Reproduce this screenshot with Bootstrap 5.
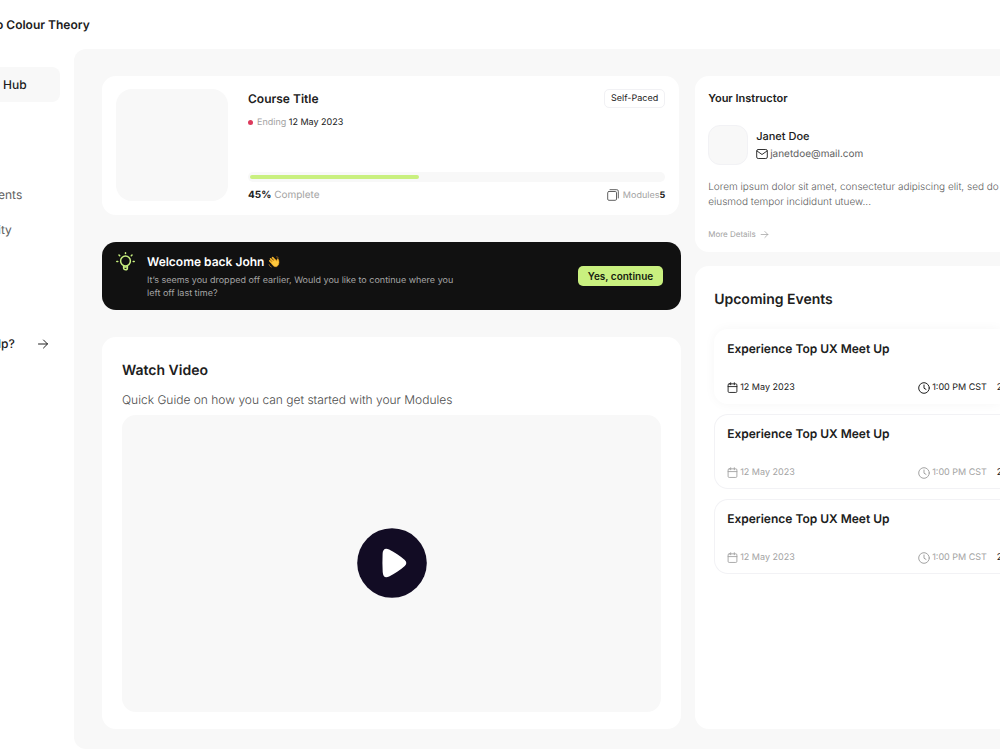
<!DOCTYPE html>
<html lang="en">
<head>
<meta charset="utf-8">
<meta name="viewport" content="width=device-width, initial-scale=1">
<title>Colour Theory</title>
<link href="https://cdn.jsdelivr.net/npm/bootstrap@5.3.0/dist/css/bootstrap.min.css" rel="stylesheet">
<style>
:root{--ink:#202020;--soft:#a3a3a3;--mid:#606060;--wash:#f8f8f8;--lime:#c9f07f}
body{font-family:Inter,"Liberation Sans",sans-serif;font-size:10px;line-height:14px;color:var(--ink);background:#fff;overflow-x:hidden;text-rendering:geometricPrecision}
a{color:inherit;text-decoration:none}
h1,h2,h3,p{margin:0;font-size:inherit;line-height:inherit}
h1,h2,h3{font-weight:600}
svg{display:block;flex:none;fill:none;stroke:currentColor;stroke-width:1;stroke-linecap:round;stroke-linejoin:round}
.topbar{height:49px}
.t-8{font-size:8px;line-height:12px}
.t-9{font-size:9px;line-height:13px}
.t-10{font-size:10px;line-height:16px}
.t-11{font-size:11px;line-height:16px}
.t-12{font-size:12px;line-height:16px}
.t-14{font-size:14px;line-height:20px}
.crumb{margin-left:-4px}
.side{flex:0 0 74px;padding-top:18px;font-size:12px;color:var(--mid)}
.side a{display:flex;align-items:center;height:35px;white-space:nowrap}
.side .is-active{width:60px;padding-left:3px;background:var(--wash);border-radius:0 8px 8px 0;color:var(--ink);font-weight:500}
.side .upper{margin-top:75px}
.side .help{margin:79px 25px 0 0;justify-content:space-between;color:var(--ink);font-weight:500}
.clip-start{margin-left:-2px}
.stage{background:var(--wash);border-radius:12px 0 0 12px;display:grid;grid-template-columns:1.9fr 1fr;gap:14px;padding:27px 0 20px 28px}
.panel{background:#fff;border-radius:14px}
.panel-end{border-radius:14px 0 0 14px}
.stack{display:flex;flex-direction:column;gap:27px}
.column{display:flex;flex-direction:column;gap:14px;min-width:0}
.course{padding:13px 14px 12px 14px;margin-right:2px}
.thumb{flex:0 0 112px;height:112px;border-radius:16px;background:var(--wash);margin:0 20px 2px 0}
.dot{width:5px;height:5px;border-radius:50%;background:#dc3a5c}
.pace{border:1px solid #f1f1f4;border-radius:5px;padding:2px 6px}
.meter{height:10px;background:var(--wash);border-radius:5px;padding:3px 2px}
.meter .progress-bar{height:4px;border-radius:2px;background:var(--lime)}
.meter-note{margin-top:5px}
.soft{color:var(--soft)}
.mid{color:var(--mid)}
.banner{background:#111;border-radius:14px;color:#fff;min-height:68px;padding:10px 18px 10px 14px}
.banner-copy{padding:2px 0 0 12px}
.banner p{color:#a5a5a5;max-width:320px}
.go{background:var(--lime);color:#171c10;font-weight:600;padding:2px 10px;border-radius:5px;border:0}
.go:hover{background:#b9e36b}
.video{padding:24px 20px 17px}
.guide{margin:11px 0 7px;font-weight:300;color:#4c4c4c}
.player{aspect-ratio:538/296;background:var(--wash);border-radius:14px}
.play{border:0;padding:0;background:none}
.teacher{padding:14px 0 12px 13px;overflow:hidden}
.who{margin-top:19px}
.mail{gap:2px;margin-top:2px}
.avatar{width:40px;height:40px;border-radius:12px;background:var(--wash);border:1px solid #f2f2f5}
.bio{line-height:15px;white-space:nowrap;font-weight:300;margin-top:15px}
.more{margin-top:18px}
.events{padding:24px 0 20px 19px;overflow:hidden}
.event-list{display:flex;flex-direction:column;gap:10px;margin-top:19px}
.event{border:1px solid #f2f2f5;border-right:0;border-radius:14px 0 0 14px;height:75px;padding:11px 0 9px 12px;display:flex;flex-direction:column;justify-content:space-between;overflow:hidden;white-space:nowrap}
.event.now{border-color:transparent;box-shadow:0 0 12px rgba(0,0,0,.04)}
.event-date{flex:0 0 70%}
.event-date,.event-time{display:flex;align-items:center;gap:2px}
.seats{margin-left:10px}
.later{color:var(--soft)}
</style>
</head>
<body>
<svg width="0" height="0" class="position-absolute" aria-hidden="true">
<symbol id="arrow" viewBox="0 0 12 12"><path d="M1.5 6h9M6.5 2l4 4-4 4"/></symbol>
<symbol id="cal" viewBox="0 0 12 12"><rect x="1.2" y="2" width="9.600" height="9.400" rx="1.2"/><path d="M1.200 5h9.600M4 .8v2.200M8 .8v2.200"/></symbol>
<symbol id="clock" viewBox="0 0 12 12"><circle cx="6" cy="6" r="5.300"/><path d="M6 3v3.2l2 1.2"/></symbol>
</svg>
<header class="topbar d-flex align-items-center"><h1 class="crumb t-12">o Colour Theory</h1></header>
<div class="d-flex">
<nav class="side">
<a href="#" class="is-active">Hub</a>
<a href="#" class="upper"><span class="clip-start">ents</span></a>
<a href="#"><span class="clip-start">ity</span></a>
<a href="#" class="help"><span class="clip-start">lp?</span><svg width="12" height="12"><use href="#arrow"/></svg></a>
</nav>
<main class="stage flex-grow-1">
<div class="stack">
<section class="panel course d-flex">
<div class="thumb"></div>
<div class="flex-grow-1 d-flex flex-column">
<div class="d-flex justify-content-between align-items-center"><h2 class="t-12">Course Title</h2><span class="pace t-9">Self-Paced</span></div>
<div class="d-flex align-items-center t-9 mt-2"><span class="dot me-1"></span><span><span class="soft">Ending</span> 12 May 2023</span></div>
<div class="meter mt-auto" role="progressbar" aria-valuenow="45" aria-valuemin="0" aria-valuemax="100" aria-label="Course progress"><div class="progress-bar" style="width:41%"></div></div>
<div class="d-flex justify-content-between align-items-center t-10 meter-note"><span><b>45%</b> <span class="soft">Complete</span></span>
<span class="d-flex align-items-center t-9"><svg class="mid me-1" width="12" height="12" viewBox="0 0 12 12"><rect x=".7" y="2.5" width="8.8" height="8.8" rx="1.2"/><path d="M3 .7h6.8q1.5 0 1.5 1.5V9"/></svg><span class="soft">Modules</span><b>5</b></span></div>
</div>
</section>
<section class="banner d-flex">
<svg width="19" height="19" viewBox="0 0 19 19" color="#c9f07f"><g stroke-width="1.500"><circle cx="9.500" cy="9" r="4.900"/><path d="M7.600 13.600v2.300a1.900 1.900 0 0 0 3.800 0v-2.300M7.600 15h3.800M9.500.8v.8M.8 9.500h1M17.200 9.500h1M3 3l.7.7M16 3l-.7.7"/></g></svg>
<div class="banner-copy flex-grow-1"><h2 class="t-12 d-flex align-items-center">Welcome back John<svg class="ms-1" width="12" height="12" viewBox="0 0 12 12" role="img" aria-label="Waving hand"><path d="M1.800 4.800 5 8M2.600 2.800 6.200 6.400M4.600 1.700 8.200 5.300" stroke="#f9b72c" stroke-width="1.700"/><path d="M3 6.200 7 3.800 9 5.300 9.100 3.200q.2-.8.9-.4 1 1.200 1 3.800 0 2.800-2.200 4-2.200.8-3.800-1z" fill="#ffc83d" stroke="#f5a623" stroke-width=".5"/><path d="M1 8.500q.4 2 2.300 2.600M8.600.8q1.300.1 1.900 1" stroke="#c98a34" stroke-width=".7"/></svg></h2>
<p class="t-9 mt-1">It’s seems you dropped off earlier, Would you like to continue where you left off last time?</p></div>
<button type="button" class="go t-10 align-self-center">Yes, continue</button>
</section>
<section class="panel video">
<h2 class="t-14">Watch Video</h2>
<p class="t-12 guide">Quick Guide on how you can get started with your Modules</p>
<div class="player d-flex align-items-center justify-content-center"><button type="button" class="play" aria-label="Play video"><svg width="70" height="70" viewBox="0 0 70 70"><g stroke="none"><circle cx="35" cy="35" r="34.800" fill="#120c24"/><path d="M25.600 26c0-4.500 2.500-6.500 6.500-4.500 5.500 2.700 11 6.300 15.700 10.500q3 3 0 6C43.100 42.200 37.600 45.800 32.100 48.500c-4 2-6.100 0-6.400-4.500q-.5-9-.1-18z" fill="#fff"/></g></svg></button></div>
</section>
</div>
<div class="column">
<section class="panel panel-end teacher">
<h2 class="t-11">Your Instructor</h2>
<div class="d-flex align-items-center who"><div class="avatar"></div><div class="ms-2"><h3 class="t-11 fw-medium">Janet Doe</h3><a href="#" class="d-flex align-items-center mid t-10 mail"><svg width="12" height="12" viewBox="0 0 12 12" color="#333"><rect x=".7" y="1.500" width="10.600" height="9" rx="1.500"/><path d="m1 3 5 3.500L11 3"/></svg>janetdoe@mail.com</a></div></div>
<p class="bio mid">Lorem ipsum dolor sit amet, consectetur adipiscing elit, sed do<br>eiusmod tempor incididunt utuew...</p>
<a href="#" class="soft t-8 d-flex align-items-center more">More Details<svg class="ms-1" width="9" height="9"><use href="#arrow"/></svg></a>
</section>
<section class="panel panel-end events flex-grow-1">
<h2 class="t-14">Upcoming Events</h2>
<div class="event-list">
<article class="event now"><h3 class="t-12">Experience Top UX Meet Up</h3><div class="d-flex t-9"><span class="event-date"><svg width="11" height="11"><use href="#cal"/></svg>12 May 2023</span><span class="event-time"><svg width="12" height="12"><use href="#clock"/></svg>1:00 PM CST</span><span class="seats">2</span></div></article>
<article class="event"><h3 class="t-12">Experience Top UX Meet Up</h3><div class="d-flex t-9"><span class="event-date later"><svg width="11" height="11"><use href="#cal"/></svg>12 May 2023</span><span class="event-time later"><svg width="12" height="12"><use href="#clock"/></svg>1:00 PM CST</span><span class="seats">2</span></div></article>
<article class="event"><h3 class="t-12">Experience Top UX Meet Up</h3><div class="d-flex t-9"><span class="event-date later"><svg width="11" height="11"><use href="#cal"/></svg>12 May 2023</span><span class="event-time later"><svg width="12" height="12"><use href="#clock"/></svg>1:00 PM CST</span><span class="seats">2</span></div></article>
</div>
</section>
</div>
</main>
</div>
<script src="https://cdn.jsdelivr.net/npm/bootstrap@5.3.0/dist/js/bootstrap.bundle.min.js"></script>
</body>
</html>
